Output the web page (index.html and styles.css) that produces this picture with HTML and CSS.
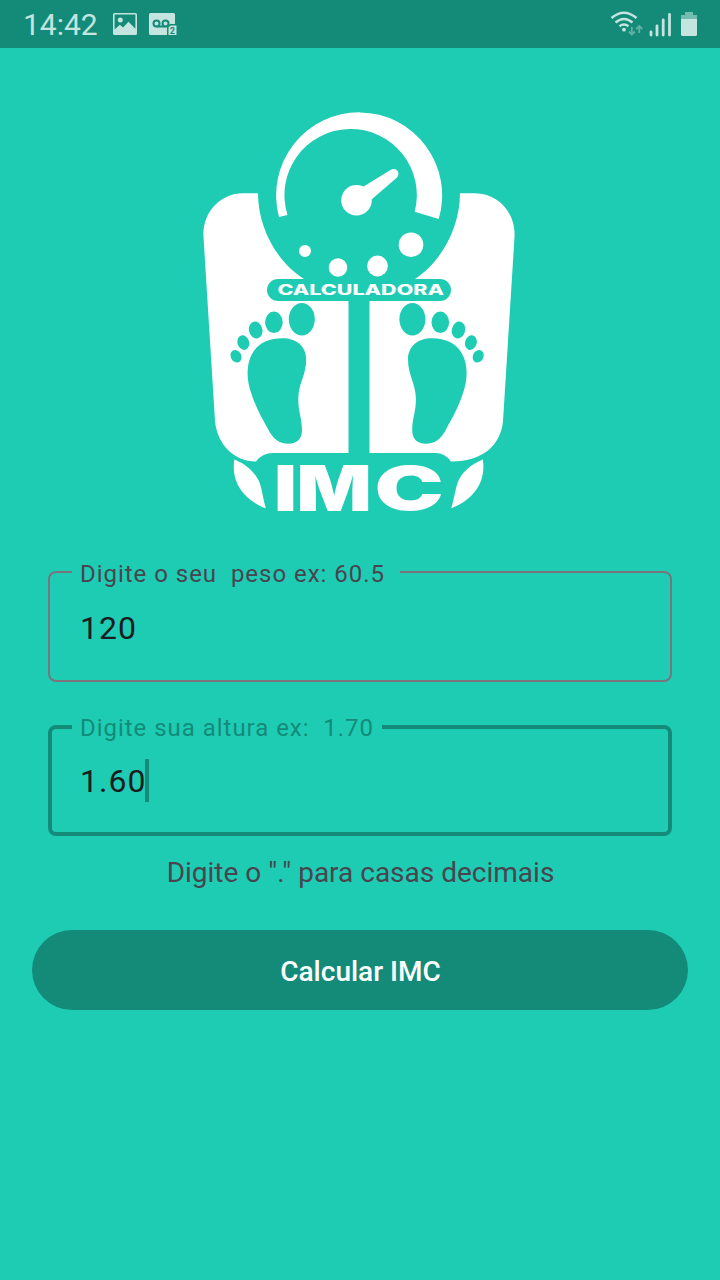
FILE: index.html
```html
<!DOCTYPE html>
<html lang="pt-BR">
<head>
<meta charset="utf-8">
<title>Calculadora IMC</title>
<link rel="stylesheet" href="styles.css">
</head>
<body>
<header class="status">
  <span class="time">14:42</span>
  <svg class="ic-photo" width="24" height="22" viewBox="0 0 24 22"><path fill-rule="evenodd" d="M1.500 0h21q1.500 0 1.500 1.500v19q0 1.500-1.500 1.500h-21Q0 22 0 20.500v-19Q0 0 1.500 0zM1.600 1.600v15l5.200-4.800 3.200 2.600 5.500-5.600 6.900 7V1.600z"/><circle cx="7.300" cy="7" r="2.500"/></svg>
  <svg class="ic-mail" width="29" height="23" viewBox="0 0 29 23"><path d="M1.500 0h23Q26 0 26 1.500V11h-5l-3 3v8H1.500Q0 22 0 20.500v-19Q0 0 1.500 0z"/><g class="cut"><circle cx="7.500" cy="10.500" r="3"/><circle cx="16.500" cy="10.500" r="3"/><path d="M7.500 13.500h9"/></g><path class="card" d="M21.500 12H28v10.500h-9V14.500z"/><text class="sim" x="20.800" y="21">2</text></svg>
  <span class="spacer"></span>
  <svg class="ic-wifi" width="33" height="26" viewBox="0 0 33 26"><g class="wave"><path d="M0.500 7Q13 -3.500 25.500 7"/><path d="M4.500 11.500Q13 4.500 21.500 11.500"/><path d="M8.500 15.300Q13 11.700 17.500 15.300"/></g><circle cx="13" cy="18.700" r="1.900"/><g class="arrows"><path d="M20.800 16v7.500M17.800 20.500l3 3 3-3M28.300 22V15M25.300 18l3-3 3 3"/></g></svg>
  <svg class="ic-signal" width="23" height="24" viewBox="0 0 23 24"><path d="M2 19v3M8 13v9M14.200 7v15M20.500 1.500V22"/></svg>
  <svg class="ic-batt" width="16" height="24" viewBox="0 0 16 24"><path opacity=".55" d="M4 0h8v3h4v4H0V3h4z"/><path d="M0 7h16v15.500Q16 24 14.500 24h-13Q0 24 0 22.500z"/></svg>
</header>
<main class="screen">
  <svg class="logo" width="320" height="416" viewBox="200 104 320 416">
    <path d="M258 193.300H243C220 193.300 202 213 203.500 237L215 421C217 444 234 461.500 256 461.500Q262 453 273 453H348.500V279H304C277 262 258 228 258 193.300z"/>
    <path d="M460 193.300H475C498 193.300 516 213 514.500 237L503 421C501 444 484 461.500 451 461.500Q445 453 436 453H369.500V279H415C441 262 460 228 460 193.300z"/>
    <path d="M279 217A83 83 0 1 1 438.700 219L414.700 211.800A66.200 66.200 0 1 0 287.500 215z"/>
    <circle cx="356.500" cy="200.300" r="15.300"/>
    <path d="M362 187.500L390.500 170C396 166.500 401 172.500 397 177.500L371 200z"/>
    <circle cx="305" cy="251" r="6"/><circle cx="338" cy="267.500" r="9.300"/><circle cx="377.500" cy="266" r="10.400"/><circle cx="411" cy="244.700" r="12.300"/>
    <rect class="hole" x="267" y="279" width="184" height="22" rx="11"/>
    <text class="name" x="277.500" y="295.300" textLength="166.500" lengthAdjust="spacingAndGlyphs">CALCULADORA</text>
    <defs><g id="foot">
      <path d="M282 338.200C296 338 306 346 306.200 359C306.400 375 298.500 383 298.300 399C298.200 412 302 418 302 430C302 439 297 443.700 288.500 443.700C279 443.700 273 439 267.700 428.500C262 418 256 408 251.500 394C246.300 380 246 365 252 354C257.500 343 269 338.400 282 338.200z"/>
      <ellipse cx="301.800" cy="319.200" rx="13" ry="16.200"/>
      <ellipse cx="273.900" cy="322.300" rx="8.800" ry="10.800"/>
      <ellipse cx="255.700" cy="330" rx="6.700" ry="8.500" transform="rotate(-14 255.700 330)"/>
      <ellipse cx="243.300" cy="342.600" rx="5.800" ry="7.400" transform="rotate(-18 243.300 342.600)"/>
      <ellipse cx="236" cy="356.300" rx="5.300" ry="6.500" transform="rotate(-28 236 356.300)"/>
    </g></defs>
    <use class="hole" href="#foot"/>
    <use class="hole" href="#foot" transform="translate(714.200 0) scale(-1 1)"/>
    <path d="M234.300 459.500C246 464 256 473 259.700 483C262.500 491 263 499 265.800 508.200C251 503 230 488 234.300 459.500z"/>
    <path d="M482.900 459.500C471 464 461 473 457.500 483C455 491 454 499 451.300 508.200C466 503 487 488 482.900 459.500z"/>
    <text class="imc" transform="translate(274 511) scale(1.250 1)" x="0 18" y="0">IM</text>
    <text class="imc" transform="translate(374.600 510.300) scale(1.470 .97)">C</text>
  </svg>
  <fieldset class="field weight">
    <legend>Digite o seu  peso ex: 60.5</legend>
    <div class="value">120</div>
  </fieldset>
  <fieldset class="field height">
    <legend>Digite sua altura ex:  1.70</legend>
    <div class="value">1.60<span class="caret"></span></div>
  </fieldset>
  <p class="hint">Digite o "." para casas decimais</p>
  <button class="calc">Calcular IMC</button>
</main>
</body>
</html>
```
FILE: styles.css
```css
* { box-sizing: border-box; }
body {
  margin: 0;
  height: 1280px;
  background: #1eccb4;
  font-family: Roboto, "Liberation Sans", sans-serif;
}
.status {
  display: flex;
  align-items: flex-start;
  height: 48px;
  padding: 0 23px 0 23px;
  background: #148b79;
  color: #c3e4df;
  fill: #c3e4df;
}
.time { width: 90px; font-size: 30px; line-height: 50px; }
.ic-photo { margin-top: 13px; }
.ic-mail { margin: 13px 0 0 12px; }
.cut { fill: none; stroke: #148b79; stroke-width: 2; }
.card { stroke: #148b79; stroke-width: 1; }
.sim { fill: #148b79; font-size: 9px; font-weight: 700; }
.spacer { flex: 1; }
.ic-wifi { margin-top: 11px; overflow: visible; }
.wave { fill: none; stroke: #c3e4df; stroke-width: 2.500; }
.arrows { fill: none; stroke: #62b1a5; stroke-width: 1.800; }
.ic-signal { margin: 13px 0 0 5px; fill: none; stroke: #c3e4df; stroke-width: 2.800; stroke-linecap: round; }
.ic-batt { margin: 12px 0 0 9px; }
.screen {
  display: flex;
  flex-direction: column;
  padding: 56px 32px 0;
}
.logo { align-self: center; fill: #fff; overflow: visible; }
.hole { fill: #1eccb4; }
.name { font: 800 14px Inter, sans-serif; }
.imc { font: 900 63px Inter, sans-serif; }
.field {
  min-width: 0;
  margin: 38px 16px 0;
  padding: 0 0 0 30px;
  height: 124px;
  border: 2px solid #79747e;
  border-radius: 8px;
}
.field legend {
  height: 28px;
  margin-left: -8px;
  padding: 0 8px;
  font-size: 24px;
  line-height: 30px;
  letter-spacing: 0.970px;
  white-space: pre;
}
.field.weight legend { width: 328px; line-height: 32px; color: #49454f; }
.value {
  display: flex;
  align-items: center;
  height: 84px;
  font-size: 32px;
  letter-spacing: 1px;
  color: #1c1b1f;
}
.height {
  height: 123px;
  margin-top: 31px;
  padding-left: 28px;
  border: 4px solid #148b79;
}
.height legend { width: 310px; color: #148b79; }
.height .value { height: 80px; }
.caret { width: 4px; height: 43px; margin: -2px 0 0 -1px; background: #148b79; }
.hint {
  margin: 20px 0 0;
  padding-left: 1px;
  font-size: 28px;
  line-height: 34px;
  text-align: center;
  color: #49454f;
}
.calc {
  height: 80px;
  margin-top: 40px;
  padding: 2px 0 0 1px;
  border: 0;
  border-radius: 40px;
  background: #148b79;
  color: #fff;
  font: 500 28px Roboto, sans-serif;
}
```
